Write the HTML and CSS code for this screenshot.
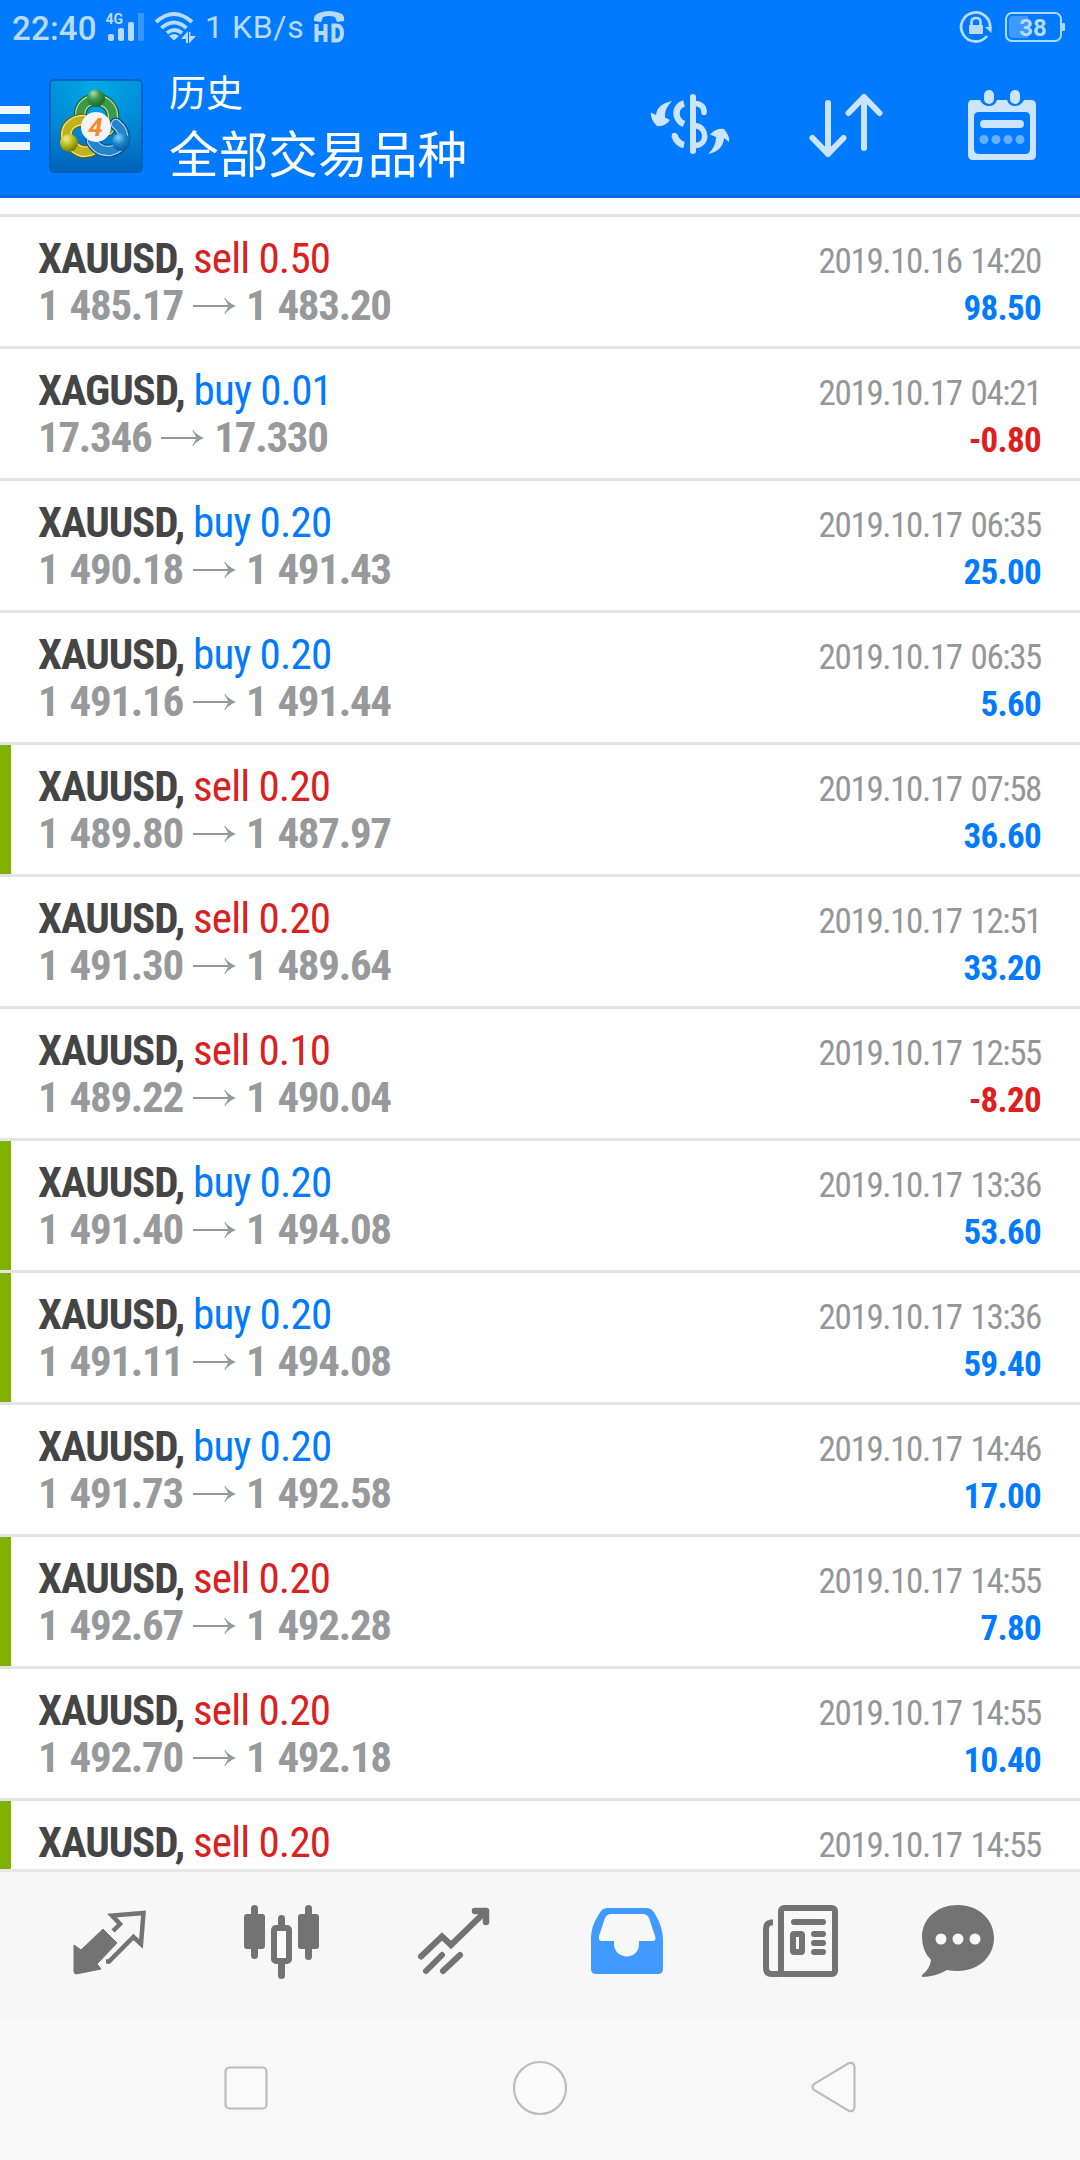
FILE: index.html
```html
<!DOCTYPE html>
<html lang="zh">
<head>
<meta charset="utf-8">
<title>历史</title>
<link rel="stylesheet" href="styles.css">
</head>
<body>
<svg class="defs" width="0" height="0" aria-hidden="true">
  <symbol id="arrow" viewBox="0 0 43 18"><path d="M0 9H38" fill="none" stroke="currentColor" stroke-width="2"/><path d="M32 0.500Q35 6 43 9Q35 12 32 17.500L31.500 16Q35 11 35 9Q35 7 31.500 2Z" fill="currentColor"/></symbol>
</svg>
<header class="header">
  <div class="status">
    <span class="clock">22:40</span>
    <svg class="signal" width="40" height="32" viewBox="105 11 40 32" fill="#b9daff"><text x="105.500" y="24" class="net">4G</text><rect x="108" y="34" width="6" height="7" rx="2"/><rect x="118" y="28" width="6" height="13" rx="2"/><rect x="128" y="22" width="6" height="19" rx="2"/><rect x="138" y="13" width="6" height="28" rx="1" opacity=".3"/></svg>
    <svg class="wifi" width="42" height="34" viewBox="154 11 42 34" fill="none" stroke="#b9daff" stroke-width="4"><path d="M156 22Q174 6 192 22M161.500 28Q174 17 186.500 28M167 33Q174 27 182 33"/><path d="M169 36Q174 32 179 36L174 40.500ZM181 39L188 31V43H186V39ZM189 32H190.500V36H196L189 43.500Z" fill="#b9daff" stroke="none"/></svg>
    <span class="speed">1 KB/s</span>
    <svg class="hd" width="32" height="34" viewBox="313 10 32 34" fill="none" stroke="#b9daff"><path d="M314 21Q313 15 319 13Q329 9 340 13Q345 15 344 21L337 22L335 17Q329 15 323 17L321 22Z" fill="#b9daff" stroke="none"/><path d="M316.500 24V42M325.500 24V42M316.500 33H325.500M333.500 25.500V40.500H336Q342 40.500 342 33Q342 25.500 336 25.500Z" stroke-width="4"/></svg>
    <svg class="lock" width="34" height="34" viewBox="959 10 34 34" fill="none" stroke="#b9daff"><path d="M987 36A14.500 14.500 0 1 1 990 29" stroke-width="2.800"/><path d="M985 27H991.500V33Z" fill="#b9daff" stroke="none"/><rect x="969" y="25" width="14" height="9" rx="1" fill="#b9daff" stroke="none"/><path d="M971.500 26V22Q971.500 18 976 18T980.500 22V26" stroke-width="2.600"/></svg>
    <svg class="battery" width="62" height="32" viewBox="1004 11 62 32"><rect x="1006" y="13" width="55" height="28" rx="6" fill="none" stroke="#a9d8ff" stroke-width="2"/><path d="M1013 16H1028V38H1013Q1009 38 1009 34V20Q1009 16 1013 16Z" fill="#4099ff"/><rect x="1062" y="23" width="3" height="8" rx="1" fill="#a9d8ff"/><text x="1033" y="36" text-anchor="middle" class="charge">38</text></svg>
  </div>
  <div class="toolbar">
    <div class="menu"><i></i><i></i><i></i></div>
    <svg class="logo" width="94" height="94" viewBox="0 0 94 94">
      <defs>
        <linearGradient id="sky" x1="0" y1="0" x2="0" y2="1"><stop offset="0" stop-color="#0098e0"/><stop offset=".5" stop-color="#0087d2"/><stop offset="1" stop-color="#0062b8"/></linearGradient>
        <radialGradient id="glow" cx=".5" cy=".15" r=".55"><stop offset="0" stop-color="#00b0ea"/><stop offset="1" stop-color="#0090d8" stop-opacity="0"/></radialGradient>
        <radialGradient id="green" cx=".35" cy=".25" r=".8"><stop offset="0" stop-color="#a5dfae"/><stop offset=".4" stop-color="#419c54"/><stop offset="1" stop-color="#146227"/></radialGradient>
        <radialGradient id="yellow" cx=".35" cy=".25" r=".8"><stop offset="0" stop-color="#f2ef8b"/><stop offset=".5" stop-color="#b9b71e"/><stop offset="1" stop-color="#6c7304"/></radialGradient>
        <radialGradient id="blue" cx=".35" cy=".25" r=".8"><stop offset="0" stop-color="#8ad0f3"/><stop offset=".5" stop-color="#1c82c7"/><stop offset="1" stop-color="#06559b"/></radialGradient>
      </defs>
      <rect x="1" y="1" width="92" height="92" rx="4" fill="url(#sky)"/><rect x="1" y="1" width="92" height="92" rx="4" fill="url(#glow)" stroke="#0757b0" stroke-width="1.500"/>
      <g fill="none" stroke-linecap="round">
        <path d="M32 42C25 15 64 14 64 38Q64 46 59 51" stroke="#17602d" stroke-width="13"/><path d="M32 42C25 15 64 14 64 38Q64 46 59 51" stroke="#b4dfae" stroke-width="10.500"/><path d="M32 42C25 15 64 14 64 38Q64 46 59 51" stroke="#3f974a" stroke-width="8"/>
        <path d="M34 41C15 42 12 62 26 69Q35 76 45 70" stroke="#6b6810" stroke-width="13"/><path d="M34 41C15 42 12 62 26 69Q35 76 45 70" stroke="#f4ec8b" stroke-width="10.500"/><path d="M34 41C15 42 12 62 26 69Q35 76 45 70" stroke="#bfb41d" stroke-width="8"/>
        <path d="M67 45C79 55 75 69 61 72Q49 73 43 62" stroke="#074d8d" stroke-width="13"/><path d="M67 45C79 55 75 69 61 72Q49 73 43 62" stroke="#9bd2f7" stroke-width="10.500"/><path d="M67 45C79 55 75 69 61 72Q49 73 43 62" stroke="#2484c8" stroke-width="8"/>
      </g>
      <circle cx="47" cy="19" r="9" fill="url(#green)"/><circle cx="20" cy="64" r="9" fill="url(#yellow)"/><circle cx="72" cy="63" r="9" fill="url(#blue)"/>
      <circle cx="47" cy="48" r="15" fill="#f4f3f5"/><text x="46.500" y="57" text-anchor="middle" class="four">4</text>
    </svg>
    <div class="titles"><div class="title">历史</div><div class="subtitle">全部交易品种</div></div>
    <svg class="act dollar" width="80" height="62" viewBox="650 93 80 62" fill="none" stroke="#cce4ff" stroke-width="5.500"><path d="M693 97V151" stroke-width="6" stroke-linecap="round"/><path d="M684 103.500C674 106 674 120 684 124" stroke-width="6.500"/><path d="M674.500 135.500Q677 143.500 684 145" stroke-width="6.500"/><path d="M674.500 135.500V136M704 112V112.500" stroke-linecap="round"/><path d="M695 103.500Q704 104 704 112M695 125.500C708 127 708 145 695 145.500"/><g fill="#cce4ff" stroke="none"><path d="M672 101Q657 104 656 115L651 112.500Q650 119 657 126Q665 127 670 120L665 117.500Q664 109 672 101Z"/><path d="M708 154Q723 151 724 138L729 142Q730 136 724 129Q716 128 710 134.500L716 137Q716 147 708 154Z"/></g></svg>
    <svg class="act sort" width="74" height="66" viewBox="809 93 74 66" fill="none" stroke="#cce4ff" stroke-width="6" stroke-linecap="round" stroke-linejoin="round"><path d="M828 103V154M812.500 138L828 154L843.500 138M864 148V97M848.500 113L864 97L879.500 113"/></svg>
    <svg class="act calendar" width="70" height="72" viewBox="967 89 70 72"><path d="M972 100H980Q983 106 989 106Q995 106 997 100H1007Q1009 106 1015 106Q1021 106 1024 100H1031Q1036 100 1036 105V155Q1036 160 1031 160H973Q968 160 968 155V105Q968 100 972 100ZM979 112Q974 112 974 117V149Q974 154 979 154H1025Q1030 154 1030 149V117Q1030 112 1025 112Z" fill="#cce4ff" fill-rule="evenodd"/><g fill="#cce4ff"><rect x="984" y="90" width="10" height="14" rx="5"/><rect x="1010" y="90" width="10" height="14" rx="5"/><rect x="980" y="120" width="44" height="8" rx="4"/></g><g fill="#66afff"><circle cx="984" cy="139.500" r="4.500"/><circle cx="996" cy="139.500" r="4.500"/><circle cx="1008" cy="139.500" r="4.500"/><circle cx="1020" cy="139.500" r="4.500"/></g></svg>
  </div>
</header>
<main class="list">
  <div class="row"><div class="deal"><p class="name">XAUUSD, <span class="sell">sell 0.50</span></p><p class="price">1 485.17<svg><use href="#arrow"/></svg>1 483.20</p></div><div class="result"><p class="date">2019.10.16 14:20</p><p class="profit">98.50</p></div></div>
  <div class="row"><div class="deal"><p class="name">XAGUSD, <span class="buy">buy 0.01</span></p><p class="price">17.346<svg><use href="#arrow"/></svg>17.330</p></div><div class="result"><p class="date">2019.10.17 04:21</p><p class="profit loss">-0.80</p></div></div>
  <div class="row"><div class="deal"><p class="name">XAUUSD, <span class="buy">buy 0.20</span></p><p class="price">1 490.18<svg><use href="#arrow"/></svg>1 491.43</p></div><div class="result"><p class="date">2019.10.17 06:35</p><p class="profit">25.00</p></div></div>
  <div class="row"><div class="deal"><p class="name">XAUUSD, <span class="buy">buy 0.20</span></p><p class="price">1 491.16<svg><use href="#arrow"/></svg>1 491.44</p></div><div class="result"><p class="date">2019.10.17 06:35</p><p class="profit">5.60</p></div></div>
  <div class="row tp"><div class="deal"><p class="name">XAUUSD, <span class="sell">sell 0.20</span></p><p class="price">1 489.80<svg><use href="#arrow"/></svg>1 487.97</p></div><div class="result"><p class="date">2019.10.17 07:58</p><p class="profit">36.60</p></div></div>
  <div class="row"><div class="deal"><p class="name">XAUUSD, <span class="sell">sell 0.20</span></p><p class="price">1 491.30<svg><use href="#arrow"/></svg>1 489.64</p></div><div class="result"><p class="date">2019.10.17 12:51</p><p class="profit">33.20</p></div></div>
  <div class="row"><div class="deal"><p class="name">XAUUSD, <span class="sell">sell 0.10</span></p><p class="price">1 489.22<svg><use href="#arrow"/></svg>1 490.04</p></div><div class="result"><p class="date">2019.10.17 12:55</p><p class="profit loss">-8.20</p></div></div>
  <div class="row tp"><div class="deal"><p class="name">XAUUSD, <span class="buy">buy 0.20</span></p><p class="price">1 491.40<svg><use href="#arrow"/></svg>1 494.08</p></div><div class="result"><p class="date">2019.10.17 13:36</p><p class="profit">53.60</p></div></div>
  <div class="row tp"><div class="deal"><p class="name">XAUUSD, <span class="buy">buy 0.20</span></p><p class="price">1 491.11<svg><use href="#arrow"/></svg>1 494.08</p></div><div class="result"><p class="date">2019.10.17 13:36</p><p class="profit">59.40</p></div></div>
  <div class="row"><div class="deal"><p class="name">XAUUSD, <span class="buy">buy 0.20</span></p><p class="price">1 491.73<svg><use href="#arrow"/></svg>1 492.58</p></div><div class="result"><p class="date">2019.10.17 14:46</p><p class="profit">17.00</p></div></div>
  <div class="row tp"><div class="deal"><p class="name">XAUUSD, <span class="sell">sell 0.20</span></p><p class="price">1 492.67<svg><use href="#arrow"/></svg>1 492.28</p></div><div class="result"><p class="date">2019.10.17 14:55</p><p class="profit">7.80</p></div></div>
  <div class="row"><div class="deal"><p class="name">XAUUSD, <span class="sell">sell 0.20</span></p><p class="price">1 492.70<svg><use href="#arrow"/></svg>1 492.18</p></div><div class="result"><p class="date">2019.10.17 14:55</p><p class="profit">10.40</p></div></div>
  <div class="row tp last"><div class="deal"><p class="name">XAUUSD, <span class="sell">sell 0.20</span></p></div><div class="result"><p class="date">2019.10.17 14:55</p></div></div>
</main>
<nav class="tabs">
  <svg viewBox="70 1900 80 80"><path d="M103 1929L117 1943L97 1964L101 1969L76 1974Q74 1974 74 1971V1945L81 1950Z" fill="#737373" stroke="#737373" stroke-width="1" stroke-linejoin="round"/><path d="M113 1931L120 1924L112 1915.500L143.500 1913L141 1944L133.500 1937L109 1961.500H106" fill="none" stroke="#737373" stroke-width="4.500"/></svg>
  <svg viewBox="241 1900 80 80" fill="#737373"><rect x="244" y="1914" width="21" height="35" rx="3"/><rect x="251" y="1905" width="7" height="54" rx="3.500"/><rect x="298" y="1914" width="21" height="35" rx="3"/><rect x="305" y="1905" width="7" height="55" rx="3.500"/><rect x="278" y="1915" width="7" height="15" rx="3.500"/><rect x="278" y="1955" width="7" height="24" rx="3.500"/><rect x="274" y="1928" width="15" height="33" rx="2" fill="#fbfbfb" stroke="#737373" stroke-width="6"/></svg>
  <svg viewBox="414 1900 80 80" fill="none" stroke="#737373" stroke-width="6" stroke-linecap="round"><path d="M421 1956.500L442 1936.500L451 1945L486 1911" stroke-linejoin="miter"/><path d="M475 1911H486V1922" stroke-linejoin="round" stroke-width="6.500"/><path d="M426 1971L442 1955M443 1971L460 1955"/></svg>
  <svg viewBox="587 1900 80 80"><path d="M607 1908H647Q652 1908 655 1914Q663 1927 663 1940V1969Q663 1974 658 1974H596Q591 1974 591 1969V1938Q591 1926 599 1914Q602 1908 607 1908ZM611 1914Q607 1914 605 1918L599 1936Q598 1941 602 1941H614V1944C614 1960 639 1961 639 1944V1941H652Q657 1941 655 1936L649 1918Q647 1914 643 1914Z" fill="#409aff" fill-rule="evenodd"/></svg>
  <svg viewBox="760 1900 80 80" fill="none" stroke="#737373" stroke-width="6"><rect x="781" y="1908" width="54" height="66" rx="3" fill="#f8f8f8"/><path d="M773 1922.500H771Q766 1923 766 1929V1968Q766 1974 772 1974H783"/><path d="M794 1922H823M814 1934H823M814 1943H823M814 1952H823" stroke-linecap="round"/><rect x="793" y="1934" width="9" height="18" rx="1"/></svg>
  <svg viewBox="918 1900 80 80"><path d="M931 1960Q922 1951 922 1937C922 1918 938 1905 958 1905S994 1919 994 1938S978 1971 958 1971Q952 1971 947 1970Q935 1977 922 1977V1975Q930 1969 931 1960Z" fill="#737373"/><g fill="#f8f8f8"><circle cx="941" cy="1939" r="5.500"/><circle cx="958" cy="1939" r="5.500"/><circle cx="975" cy="1939" r="5.500"/></g></svg>
</nav>
<footer class="sysnav">
  <svg viewBox="216 2057 60 62"><rect x="225.500" y="2067.500" width="41" height="41" rx="4"/></svg>
  <svg viewBox="510 2057 60 62"><circle cx="540" cy="2088" r="26"/></svg>
  <svg viewBox="804 2057 60 62"><path d="M849 2063L814 2084Q811 2087 814 2090L849 2111Q854 2112 854.500 2107V2067Q854 2062 849 2063Z"/></svg>
</footer>
</body>
</html>
```
FILE: styles.css
```css
* { box-sizing: border-box; margin: 0; padding: 0; }
body { width: 1080px; height: 2160px; display: flex; flex-direction: column; overflow: hidden; background: #fff; font-family: "Roboto Condensed", Roboto, "Noto Sans CJK SC", sans-serif; }
svg { display: block; flex: none; }
.defs { display: none; }
.header { height: 214px; flex: none; background: linear-gradient(#007aff 195px, #0a6cdc 195px, #0a6cdc 198px, #fff 198px); font-family: Roboto, "Noto Sans CJK SC", sans-serif; }
.status { height: 56px; display: flex; align-items: flex-start; color: #b9daff; padding-left: 12px; }
.clock { width: 93px; padding-top: 12px; font-size: 33px; line-height: 34px; letter-spacing: .2px; font-weight: 500; }
.signal { margin-top: 11px; }
.net { font: bold 14px Roboto, sans-serif; }
.wifi { margin: 11px 0 0 9px; }
.speed { width: 108px; margin-left: 9px; padding-top: 10px; font-size: 32px; line-height: 34px; letter-spacing: .6px; white-space: nowrap; }
.hd { margin: 10px 0 0; }
.lock { margin: 10px 11px 0 auto; }
.battery { margin: 11px 14px 0 0; }
.charge { font: bold 24px Roboto, sans-serif; fill: #b9daff; }
.toolbar { height: 142px; display: flex; align-items: flex-start; }
.menu { width: 49px; padding-top: 50px; display: grid; gap: 10px; }
.menu i { width: 30px; height: 8px; background: #f0f7ff; }
.logo { margin-top: 23px; }
.four { font: italic bold 26px Roboto, sans-serif; fill: #f28c2e; }
.titles { width: 507px; padding: 9px 0 0 26px; color: #fff; font-family: "Noto Sans CJK SC", sans-serif; white-space: nowrap; }
.title { font-size: 37px; line-height: 53px; }
.subtitle { font-size: 49.700px; line-height: 66px; }
.dollar { margin: 37px 0 0; }
.sort { margin: 37px 0 0 79px; }
.calendar { margin: 33px 0 0 84px; }
.list { height: 1655px; flex: none; overflow: hidden; }
.row { height: 132px; border-top: 3px solid #e4e4e4; display: flex; justify-content: space-between; padding: 0 38px; white-space: nowrap; font-stretch: 75%; }
.row.tp { background: linear-gradient(90deg, #80b000 11px, #fff 11px); }
.row.last { height: 71px; }
.deal { padding-top: 18px; font-size: 43px; line-height: 47px; }
.result { padding-top: 21px; font-size: 35px; line-height: 47px; text-align: right; }
.name { font-weight: 700; color: #454545; letter-spacing: -1.100px; }
.name span { font-weight: 400; letter-spacing: -.8px; }
.sell { color: #dc2020; }
.buy { color: #007aff; }
.price { display: flex; align-items: center; font-weight: 700; color: #98999b; letter-spacing: -1.300px; word-spacing: 2.500px; }
.price svg { width: 43px; height: 18px; margin: 0 10px; }
.date { color: #959697; letter-spacing: -1.350px; word-spacing: 2px; padding-right: 1px; }
.profit { font-weight: 700; color: #007aff; letter-spacing: -.7px; padding-right: 1px; }
.profit.loss { color: #dc2020; }
.tabs { height: 149px; flex: none; background: #f7f7f7; border-top: 3px solid #e8e8e8; display: grid; grid-template-columns: 171px 173px 173px 173px 158px 162px; padding: 28px 0 0 70px; }
.tabs svg { width: 80px; height: 80px; }
.sysnav { height: 142px; flex: none; background: #f8f8f8; display: flex; justify-content: space-between; padding: 39px 216px 0; }
.sysnav svg { width: 60px; height: 62px; fill: #fafafa; stroke: #bcbcbc; stroke-width: 2.200; }
```
